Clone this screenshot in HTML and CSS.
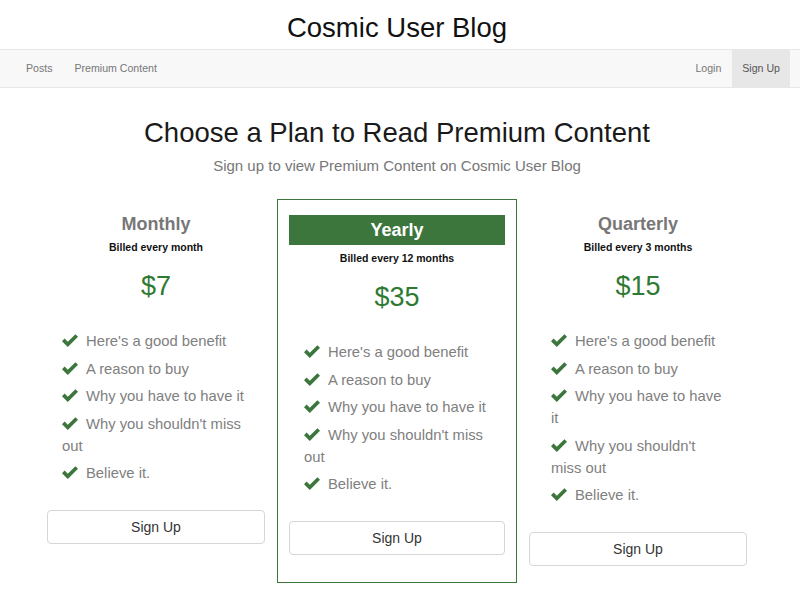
FILE: index.html
```html
<!DOCTYPE html>
<html lang="en">
<head>
<meta charset="utf-8">
<title>Cosmic User Blog</title>
<link rel="stylesheet" href="styles.css">
</head>
<body>
<header class="site-header">
  <h1 class="site-title">Cosmic User Blog</h1>
</header>
<nav class="navbar">
  <ul class="nav">
    <li><a href="#">Posts</a></li>
    <li><a href="#">Premium Content</a></li>
  </ul>
  <ul class="nav">
    <li><a href="#">Login</a></li>
    <li class="active"><a href="#">Sign Up</a></li>
  </ul>
</nav>
<main class="page">
  <h2 class="page-title">Choose a Plan to Read Premium Content</h2>
  <p class="page-sub">Sign up to view Premium Content on Cosmic User Blog</p>
  <div class="plans">
    <section class="plan">
      <h3 class="plan-name">Monthly</h3>
      <p class="plan-billing">Billed every month</p>
      <p class="plan-price">$7</p>
      <ul class="features">
        <li><svg class="check" viewBox="0 0 16 13"><path d="M0 7.2 L2.6 4.6 L5.8 7.8 L13.4 0.2 L16 2.8 L5.8 13 Z"/></svg>Here's a good benefit</li>
        <li><svg class="check" viewBox="0 0 16 13"><path d="M0 7.2 L2.6 4.6 L5.8 7.8 L13.4 0.2 L16 2.8 L5.8 13 Z"/></svg>A reason to buy</li>
        <li><svg class="check" viewBox="0 0 16 13"><path d="M0 7.2 L2.6 4.6 L5.8 7.8 L13.4 0.2 L16 2.8 L5.8 13 Z"/></svg>Why you have to have it</li>
        <li><svg class="check" viewBox="0 0 16 13"><path d="M0 7.2 L2.6 4.6 L5.8 7.8 L13.4 0.2 L16 2.8 L5.8 13 Z"/></svg>Why you shouldn't miss out</li>
        <li><svg class="check" viewBox="0 0 16 13"><path d="M0 7.2 L2.6 4.6 L5.8 7.8 L13.4 0.2 L16 2.8 L5.8 13 Z"/></svg>Believe it.</li>
      </ul>
      <button class="btn">Sign Up</button>
    </section>
    <section class="plan plan-featured">
      <h3 class="plan-name plan-name-featured">Yearly</h3>
      <p class="plan-billing">Billed every 12 months</p>
      <p class="plan-price">$35</p>
      <ul class="features">
        <li><svg class="check" viewBox="0 0 16 13"><path d="M0 7.2 L2.6 4.6 L5.8 7.8 L13.4 0.2 L16 2.8 L5.8 13 Z"/></svg>Here's a good benefit</li>
        <li><svg class="check" viewBox="0 0 16 13"><path d="M0 7.2 L2.6 4.6 L5.8 7.8 L13.4 0.2 L16 2.8 L5.8 13 Z"/></svg>A reason to buy</li>
        <li><svg class="check" viewBox="0 0 16 13"><path d="M0 7.2 L2.6 4.6 L5.8 7.8 L13.4 0.2 L16 2.8 L5.8 13 Z"/></svg>Why you have to have it</li>
        <li><svg class="check" viewBox="0 0 16 13"><path d="M0 7.2 L2.6 4.6 L5.8 7.8 L13.4 0.2 L16 2.8 L5.8 13 Z"/></svg>Why you shouldn't miss out</li>
        <li><svg class="check" viewBox="0 0 16 13"><path d="M0 7.2 L2.6 4.6 L5.8 7.8 L13.4 0.2 L16 2.8 L5.8 13 Z"/></svg>Believe it.</li>
      </ul>
      <button class="btn">Sign Up</button>
    </section>
    <section class="plan">
      <h3 class="plan-name">Quarterly</h3>
      <p class="plan-billing">Billed every 3 months</p>
      <p class="plan-price">$15</p>
      <ul class="features features-narrow">
        <li><svg class="check" viewBox="0 0 16 13"><path d="M0 7.2 L2.6 4.6 L5.8 7.8 L13.4 0.2 L16 2.8 L5.8 13 Z"/></svg>Here's a good benefit</li>
        <li><svg class="check" viewBox="0 0 16 13"><path d="M0 7.2 L2.6 4.6 L5.8 7.8 L13.4 0.2 L16 2.8 L5.8 13 Z"/></svg>A reason to buy</li>
        <li><svg class="check" viewBox="0 0 16 13"><path d="M0 7.2 L2.6 4.6 L5.8 7.8 L13.4 0.2 L16 2.8 L5.8 13 Z"/></svg>Why you have to have it</li>
        <li><svg class="check" viewBox="0 0 16 13"><path d="M0 7.2 L2.6 4.6 L5.8 7.8 L13.4 0.2 L16 2.8 L5.8 13 Z"/></svg>Why you shouldn't miss out</li>
        <li><svg class="check" viewBox="0 0 16 13"><path d="M0 7.2 L2.6 4.6 L5.8 7.8 L13.4 0.2 L16 2.8 L5.8 13 Z"/></svg>Believe it.</li>
      </ul>
      <button class="btn">Sign Up</button>
    </section>
  </div>
</main>
</body>
</html>
```
FILE: styles.css
```css
* { box-sizing: border-box; }

body {
  margin: 0;
  font-family: "Liberation Sans", Helvetica, Arial, sans-serif;
  color: #333;
  background: #fff;
}

.site-header {
  height: 49px;
  padding-top: 11px;
}

.site-title {
  margin: 0;
  padding-right: 6px;
  text-align: center;
  font-size: 27.5px;
  line-height: 33px;
  font-weight: normal;
  color: #111;
}

.navbar {
  display: flex;
  justify-content: space-between;
  height: 39px;
  padding: 0 10px 0 15px;
  background: #f8f8f8;
  border-top: 1px solid #e7e7e7;
  border-bottom: 1px solid #e7e7e7;
}

.nav {
  display: flex;
  margin: 0;
  padding: 0;
  list-style: none;
}

.nav a {
  display: block;
  padding: 0 11px;
  font-size: 10.6px;
  line-height: 37px;
  color: #777;
  text-decoration: none;
}

.nav .active a {
  padding: 0 10px;
  background: #e7e7e7;
  color: #555;
}

.page {
  padding-right: 6px;
}

.page-title {
  margin: 28px 0 0;
  text-align: center;
  font-size: 27.5px;
  line-height: 34px;
  font-weight: normal;
  color: #1a1a1a;
}

.page-sub {
  margin: 6px 0 0;
  text-align: center;
  font-size: 15px;
  line-height: 20px;
  color: #777;
}

.plans {
  display: grid;
  grid-template-columns: 242px 240px 242px;
  align-items: start;
  margin: 23px 0 0 35px;
}

.plan {
  padding: 15px 12px 0;
  text-align: center;
}

.plan-featured {
  padding: 15px 11px 27px;
  border: 1px solid #3c763d;
}

.plan-name {
  margin: 0 0 5px;
  font-size: 18px;
  line-height: 21px;
  font-weight: bold;
  color: #777;
}

.plan-name-featured {
  height: 30px;
  margin-bottom: 6px;
  line-height: 30px;
  background: #3c763d;
  color: #fff;
}

.plan-billing {
  margin: 0;
  font-size: 10.5px;
  line-height: 15px;
  font-weight: bold;
  color: #111;
}

.plan-price {
  margin: 16px 0 0;
  font-size: 27px;
  line-height: 30px;
  color: #2f7a33;
}

.features {
  width: 195px;
  margin: 29px 0 25.5px 15px;
  padding: 0;
  list-style: none;
  text-align: left;
  font-size: 14.8px;
  line-height: 22px;
  color: #808080;
}

.features-narrow {
  width: 175px;
  margin-left: 22px;
}

.features li {
  margin-bottom: 5.5px;
}

.check {
  width: 16px;
  height: 13px;
  margin-right: 8px;
  vertical-align: -1px;
  fill: #3c763d;
}

.btn {
  display: block;
  width: 100%;
  height: 34px;
  padding: 0;
  font-family: inherit;
  font-size: 14px;
  color: #333;
  background: #fff;
  border: 1px solid #d6d6d6;
  border-radius: 4px;
}
```
